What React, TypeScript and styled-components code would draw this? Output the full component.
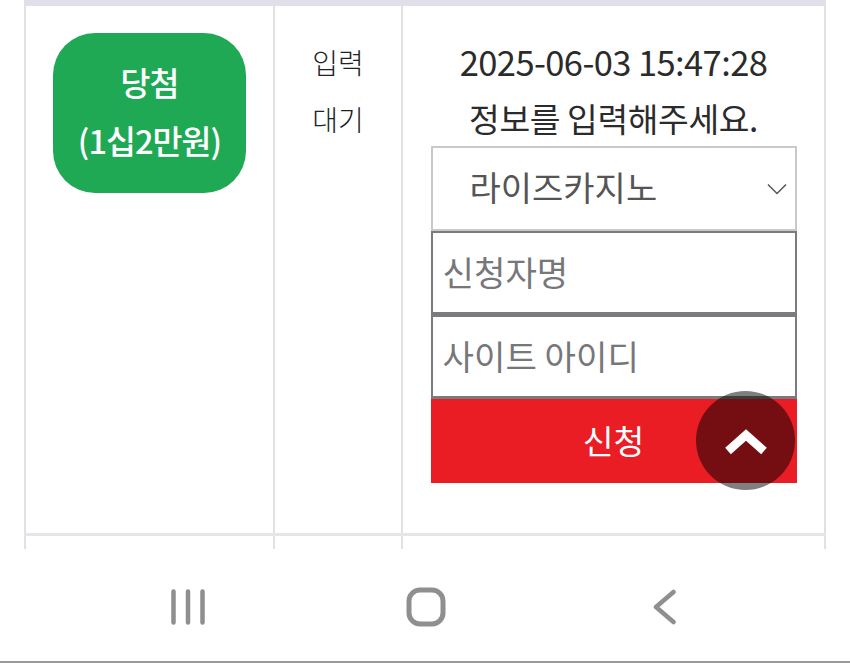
import styled, { createGlobalStyle } from 'styled-components';

const fontStack = `"Noto Sans CJK KR", "Noto Sans", sans-serif`;

const GlobalStyle = createGlobalStyle`
  html, body {
    margin: 0;
    padding: 0;
    background: #fff;
  }
  * {
    box-sizing: border-box;
  }
`;

const Screen = styled.div`
  position: relative;
  display: flex;
  flex-direction: column;
  width: 850px;
  height: 663px;
  overflow: hidden;
  font-family: ${fontStack};
`;

const TableArea = styled.div`
  height: 549px;
  padding: 0 24px;
  overflow: hidden;
`;

const Row = styled.div`
  display: grid;
  grid-template-columns: 249px 128px 425px;
  width: 802px;
  height: 536px;
  border-top: 6px solid #e0e0e8;
  border-bottom: 3px solid #e4e4ea;
`;

const NextRow = styled(Row)`
  height: 13px;
  border: 0;
`;

const Cell = styled.div`
  display: flex;
  flex-direction: column;
  align-items: center;
  border-left: 2px solid #e0e0e6;
  &:last-child {
    border-right: 2px solid #e0e0e6;
  }
`;

const BadgeCell = styled(Cell)`
  padding-top: 27px;
`;

const Badge = styled.div`
  display: flex;
  flex-direction: column;
  align-items: center;
  justify-content: center;
  width: 193px;
  height: 160px;
  padding-bottom: 4px;
  border-radius: 42px;
  background: #20a955;
  color: #fff;
  font-size: 32.6px;
  font-weight: 500;
  line-height: 58px;
  letter-spacing: -1px;
`;

const StatusCell = styled(Cell)`
  padding-top: 28px;
  color: #222;
  font-size: 28px;
  font-weight: 300;
  line-height: 57px;
`;

const InfoCell = styled(Cell)`
  padding-top: 27px;
  color: #2b2b2b;
`;

const Stamp = styled.div`
  font-size: 34.5px;
  line-height: 57px;
  letter-spacing: -0.6px;
`;

const Notice = styled.div`
  font-size: 33.4px;
  line-height: 56px;
  letter-spacing: -0.4px;
`;

const Form = styled.form`
  display: flex;
  flex-direction: column;
  width: 366px;
`;

const SelectBox = styled.div`
  position: relative;
  height: 85px;
`;

const Select = styled.select`
  width: 100%;
  height: 100%;
  padding: 0 0 5px 37px;
  border: 2px solid #c9c9c9;
  border-radius: 0;
  background: #fff;
  color: #555;
  font-family: inherit;
  font-size: 34px;
  appearance: none;
  outline: none;
`;

const Caret = styled.svg`
  position: absolute;
  top: 37px;
  right: 10px;
  width: 20px;
  height: 12px;
  pointer-events: none;
`;

const Input = styled.input`
  width: 100%;
  height: 85px;
  margin-top: -1px;
  padding: 0 10px 3px;
  border-style: solid;
  border-color: #7b7b7f;
  border-width: 3px 2px;
  border-radius: 0;
  background: #fff;
  font-family: inherit;
  font-size: 34.2px;
  outline: none;
  &::placeholder {
    color: #77777b;
    opacity: 1;
  }
`;

const Submit = styled.button`
  width: 366px;
  height: 84px;
  padding: 0 0 4px;
  border: 0;
  border-radius: 0;
  background: #ea1c24;
  color: #fff;
  font-family: inherit;
  font-size: 33.5px;
`;

const TopButton = styled.div`
  position: absolute;
  left: 696px;
  top: 391px;
  display: flex;
  align-items: center;
  justify-content: center;
  width: 99px;
  height: 99px;
  border-radius: 50%;
  background: rgba(0, 0, 0, 0.5);
`;

const NavBar = styled.nav`
  flex: 1;
  display: grid;
  grid-template-columns: 376px 100px 1fr;
  align-items: center;
  padding-top: 4px;
  border-bottom: 2px solid #999;
`;

const NavSlot = styled.div`
  display: flex;
  justify-content: center;
`;

const BackSlot = styled(NavSlot)`
  justify-content: flex-start;
  padding-left: 177px;
`;

const App = (): JSX.Element => {
  return (
    <Screen>
      <GlobalStyle />
      <TableArea>
        <Row>
          <BadgeCell>
            <Badge>
              <span>당첨</span>
              <span>(1십2만원)</span>
            </Badge>
          </BadgeCell>
          <StatusCell>
            <span>입력</span>
            <span>대기</span>
          </StatusCell>
          <InfoCell>
            <Stamp>2025-06-03 15:47:28</Stamp>
            <Notice>정보를 입력해주세요.</Notice>
            <Form onSubmit={(e) => e.preventDefault()}>
              <SelectBox>
                <Select defaultValue="rise">
                  <option value="rise">라이즈카지노</option>
                </Select>
                <Caret viewBox="0 0 20 12" fill="none" stroke="#555" strokeWidth="1.5">
                  <path d="M1 1.5 L10 10.5 L19 1.5" />
                </Caret>
              </SelectBox>
              <Input placeholder="신청자명" />
              <Input placeholder="사이트 아이디" />
              <Submit type="submit">신청</Submit>
            </Form>
          </InfoCell>
        </Row>
        <NextRow>
          <Cell />
          <Cell />
          <Cell />
        </NextRow>
      </TableArea>
      <NavBar>
        <NavSlot>
          <svg width="36" height="36" viewBox="0 0 36 36" fill="none" stroke="#8f8f8f" strokeWidth="4.5" strokeLinecap="round">
            <path d="M3.5 2.5 V33.5 M18 2.5 V33.5 M32.5 2.5 V33.5" />
          </svg>
        </NavSlot>
        <NavSlot>
          <svg width="40" height="40" viewBox="0 0 40 40" fill="none" stroke="#8f8f8f" strokeWidth="5">
            <rect x="3" y="3" width="34" height="34" rx="11" />
          </svg>
        </NavSlot>
        <BackSlot>
          <svg width="23" height="36" viewBox="0 0 23 36" fill="none" stroke="#8f8f8f" strokeWidth="4.5" strokeLinecap="round" strokeLinejoin="round">
            <path d="M20.5 3 L3 18 L20.5 33" />
          </svg>
        </BackSlot>
      </NavBar>
      <TopButton>
        <svg width="42" height="28" viewBox="0 0 42 28" fill="none" stroke="#fff" strokeWidth="8.5">
          <path d="M3 24 L21 8 L39 24" />
        </svg>
      </TopButton>
    </Screen>
  );
};

export default App;
